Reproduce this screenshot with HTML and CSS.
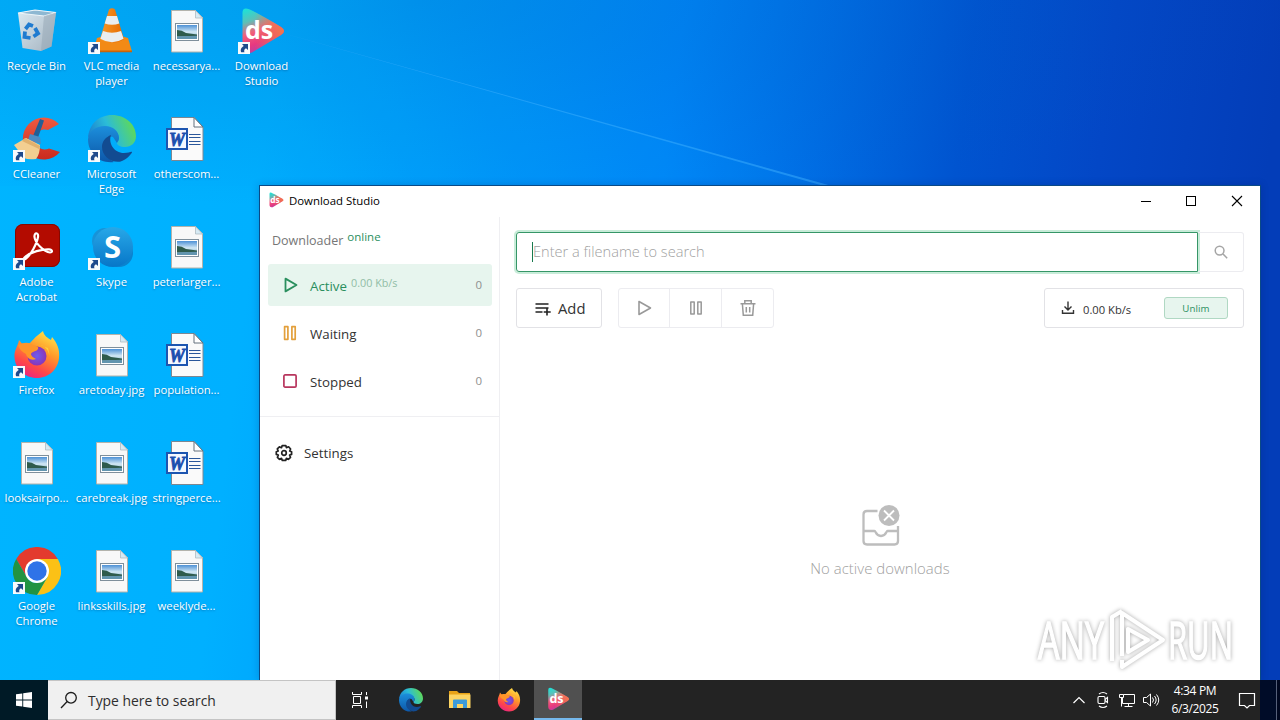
FILE: index.html
```html
<!DOCTYPE html>
<html lang="en">
<head>
<meta charset="utf-8">
<title>Download Studio</title>
<link rel="stylesheet" href="styles.css">
</head>
<body>
<svg class="sprite" width="0" height="0" aria-hidden="true">
  <defs>
    <linearGradient id="g-ds1" x1="0" y1="0" x2="0.35" y2="1"><stop offset="0" stop-color="#14e6dc"/><stop offset=".3" stop-color="#5cc0b8"/><stop offset=".55" stop-color="#f0617a"/><stop offset=".8" stop-color="#e8397f"/><stop offset="1" stop-color="#b43fa8"/></linearGradient>
    <linearGradient id="g-ds2" x1="0" y1="0" x2="1" y2="0"><stop offset=".3" stop-color="#f2774a" stop-opacity="0"/><stop offset="1" stop-color="#f2774a"/></linearGradient>
    <linearGradient id="g-edge1" x1="0" y1=".6" x2="1" y2=".3"><stop offset="0" stop-color="#1b7fd0"/><stop offset=".45" stop-color="#2bbcd8"/><stop offset="1" stop-color="#64dc4c"/></linearGradient>
    <linearGradient id="g-edge2" x1="0" y1="0" x2="0" y2="1"><stop offset="0" stop-color="#1c8fdc"/><stop offset="1" stop-color="#0d57a8"/></linearGradient>
    <linearGradient id="g-bin" x1="0" y1="0" x2="1" y2="1"><stop offset="0" stop-color="#dceaf2"/><stop offset="1" stop-color="#a3b2bf"/></linearGradient>
    <linearGradient id="g-fox" x1=".8" y1="0" x2=".3" y2="1"><stop offset="0" stop-color="#ffe94a"/><stop offset=".4" stop-color="#ff9a2a"/><stop offset=".75" stop-color="#ff4848"/><stop offset="1" stop-color="#ec2482"/></linearGradient>
    <radialGradient id="g-foxb"><stop offset="0" stop-color="#6c5cf0"/><stop offset="1" stop-color="#8a35b8"/></radialGradient>
    <linearGradient id="g-sky" x1="0" y1="0" x2="0" y2="1"><stop offset="0" stop-color="#28a8e8"/><stop offset="1" stop-color="#0776c8"/></linearGradient>
    <linearGradient id="g-photo" x1="0" y1="0" x2="0" y2="1"><stop offset="0" stop-color="#4d91d6"/><stop offset=".5" stop-color="#d3e8f4"/><stop offset="1" stop-color="#6ba2c0"/></linearGradient>
    <linearGradient id="g-cone" x1="0" y1="0" x2="1" y2="0"><stop offset="0" stop-color="#f79a28"/><stop offset="1" stop-color="#e56a00"/></linearGradient>
    <linearGradient id="g-cc" x1="0" y1="0" x2="0" y2="1"><stop offset="0" stop-color="#ef5a40"/><stop offset="1" stop-color="#c92a1e"/></linearGradient>
  </defs>
  <symbol id="shortcut" viewBox="0 0 12 12"><rect width="12" height="12" fill="#f7fafc"/><path d="M4 2h6v6L8 6.200C6.200 7.300 5.800 8.600 6.500 10.300H3.200C2 7.500 3.500 5.300 5.800 4z" fill="#1e4a8c"/></symbol>
  <symbol id="bin" viewBox="0 0 48 48">
    <path d="M5 6l17-3 21 2.500-4.500 34L28 44 9.500 41z" fill="url(#g-bin)"/>
    <path d="M5 6l17-3 21 2.500L31 9z" fill="#8eb8d2" stroke="#edf5f9" stroke-width="1.200"/>
    <path d="M31 9l12-3.500-4.500 34L28 44z" fill="#94a6b3" opacity=".5"/>
    <g fill="none" stroke="#1f7bd0" stroke-width="3.800"><path d="M12.500 22l3.500-4.500 4 1.500"/><path d="M22 21l3 5.500-4.500 3"/><path d="M17.500 31l-6-1 .5-5.500"/></g>
  </symbol>
  <symbol id="vlc" viewBox="0 0 48 48">
    <path d="M9 31l7-2h17l7 2 4 13.500H5z" fill="#f28a16"/><path d="M5 43.500h39v1.800H5z" fill="#c96408"/>
    <path d="M21 2.500q3-2.500 6 0L36 32q-12 8-24 0z" fill="url(#g-cone)"/>
    <path d="M19 9h10l2.300 7.500q-7.200 2.500-14.600 0zM15 24q9 3.500 18 0l2.600 7.700q-11.600 7-23.200 0z" fill="#e9eef0"/>
  </symbol>
  <symbol id="jpg" viewBox="0 0 48 48">
    <path d="M8.500 3.500h24l7 7v34.500h-31z" fill="#f8f8f8" stroke="#b3b3ac"/><path d="M32.500 3.500v7.500h7z" fill="#d6eaf4" stroke="#aebbc2" stroke-width=".8"/>
    <rect x="12.500" y="16.500" width="23" height="17" fill="#fff" stroke="#7f8f9b"/><rect x="14" y="18" width="20" height="14" fill="url(#g-photo)"/>
    <path d="M14 23q5 0 9 3l11 1.500v1.500l-20 .5z" fill="#2f5b4c"/><path d="M14 29.500l20-.8V32H14z" fill="#6295af"/>
  </symbol>
  <symbol id="word" viewBox="0 0 48 48">
    <path d="M8.500 2.500h22.500l9 9.500v33.500H8.500z" fill="#fafafa" stroke="#7c8792"/><path d="M31 2.500V12h9z" fill="#fff" stroke="#65717c"/>
    <path d="M26 19.500h11.500M26 22.500h11.500M26 26.500h11.500M26 29.500h11.500" stroke="#2b579a"/>
    <rect x="4" y="14" width="20" height="20" fill="#f4f8ff" stroke="#1d55b0" stroke-width="2"/>
    <text x="14" y="30.500" text-anchor="middle" class="word-letter">W</text>
  </symbol>
  <symbol id="ds" viewBox="0 0 48 48">
    <path d="M4.500 7Q4 0 10.500 2Q16 4 43 20q6 4 0 8L14 45.500Q5 48 4.500 40z" fill="url(#g-ds1)"/>
    <path d="M4.500 7Q4 0 10.500 2Q16 4 43 20q6 4 0 8L14 45.500Q5 48 4.500 40z" fill="url(#g-ds2)"/>
    <text x="21" y="32" text-anchor="middle" class="ds-letters">ds</text>
  </symbol>
  <symbol id="cc" viewBox="0 0 48 48">
    <path d="M46 9A21 21 0 1 0 47 37L36 33.500A10 10 0 1 1 35 15z" fill="url(#g-cc)"/>
    <path d="M27 4l4 1.500-7 20-5-2z" fill="#215f96"/><path d="M17 19l10 3 1 7-13-4z" fill="#4a8bc2"/>
    <path d="M1 30l12-7 14 7q0 9-4 14-8 1-12-1z" fill="#f3cf91"/><path d="M12 23l15 8-1 3-17-8z" fill="#e1b16d"/>
  </symbol>
  <symbol id="edge" viewBox="0 0 48 48">
    <path d="M0 23C1 9 11 0 24 0s24 9 24 21c0 7-5 11-11 11-5 0-8-2-8-4 0-1 2-2 2-5 0-5-5-9-12-9C9 14 2 18 0 23z" fill="url(#g-edge1)"/>
    <path d="M0 24c1-8 8-13 17-13 8 0 14 5 14 12 0 3-2 4-2 5l-4-6c-4-1-8 2-9 7-1 7 4 15 10 18C11 49 0 38 0 24z" fill="url(#g-edge2)"/>
    <path d="M14 32c0-6 4-10 9-12-3 8 3 18 13 18 5 0 7-2 8-1 1 0-5 8-12 9.700C23 48 14 41 14 32z" fill="#124b91"/>
  </symbol>
  <symbol id="adobe" viewBox="0 0 48 48">
    <rect x="2" y="1" width="45" height="43" rx="8" fill="#b30b00"/><rect x="2.500" y="1.500" width="44" height="42" rx="7.500" fill="none" stroke="#860800"/>
    <path d="M12 34c-2 2-1 3 1 1.500C18 32 24 20 25 14c.8-5-4-5-3.500 0C22 20 31 29 37 29.500c3 0 2.500-3-1-3.200C29 26 18 29 12 34z" fill="none" stroke="#fff" stroke-width="2.200"/>
  </symbol>
  <symbol id="skype" viewBox="0 0 48 48">
    <circle cx="17" cy="18" r="13" fill="#1793d8"/><circle cx="31" cy="30" r="14" fill="#0a83cf"/><circle cx="25" cy="24" r="20" fill="url(#g-sky)"/>
    <text x="24.500" y="35" text-anchor="middle" class="skype-letter">S</text>
  </symbol>
  <symbol id="fox" viewBox="0 0 48 48">
    <path d="M30 0c1 5 5 7 8 9l1-3c5 6 8 12 7 21-1 11-10 20-22 20S2 38 1.500 26C1 19 5 15 6 9l4 5 7-2q6-7 13-12z" fill="url(#g-fox)"/>
    <circle cx="24" cy="25" r="9.500" fill="url(#g-foxb)"/>
    <path d="M5 14c6-3 11-3 15 0 4 1 6 2 5 4-2 3-6 2-7 5 0 2 3 4 5 5-5 2-9-1-10-5-4-2-7-5-8-9z" fill="#ff9528"/>
    <path d="M27 14c6 1 10 7 9 13q1-5-1-10z" fill="#ffcf3a"/>
  </symbol>
  <symbol id="chrome" viewBox="0 0 48 48">
    <path d="M24 48A24 24 0 0 0 44.800 12H24l10.400 18z" fill="#fbc116"/>
    <path d="M3.200 12L13.600 30 24 12h20.800A24 24 0 0 0 3.200 12z" fill="#e33b2e"/>
    <path d="M3.200 12L13.600 30A12 12 0 0 0 24 36L24 48A24 24 0 0 1 3.200 12z" fill="#229342"/>
    <path d="M24 36l10.400-6L24 48z" fill="#229342"/>
    <circle cx="24" cy="24" r="12" fill="#fff"/><circle cx="24" cy="24" r="9.700" fill="#2f73e8"/>
  </symbol>
</svg>

<div class="screen">
  <svg class="beam" width="1280" height="186" viewBox="0 0 1280 186"><path d="M265 28L832 186H0V40z" fill="#00a8ff" opacity=".09"/><path d="M265 28L832 186H824z" fill="#45b4ff" opacity=".45"/></svg>

  <ul class="desktop">
    <li class="item"><svg class="pic"><use href="#bin"/></svg><span class="label">Recycle Bin</span></li>
    <li class="item"><svg class="pic"><use href="#cc"/></svg><svg class="link"><use href="#shortcut"/></svg><span class="label">CCleaner</span></li>
    <li class="item"><svg class="pic"><use href="#adobe"/></svg><svg class="link"><use href="#shortcut"/></svg><span class="label">Adobe<br>Acrobat</span></li>
    <li class="item"><svg class="pic"><use href="#fox"/></svg><svg class="link"><use href="#shortcut"/></svg><span class="label">Firefox</span></li>
    <li class="item"><svg class="pic"><use href="#jpg"/></svg><span class="label">looksairpo...</span></li>
    <li class="item"><svg class="pic"><use href="#chrome"/></svg><svg class="link"><use href="#shortcut"/></svg><span class="label">Google<br>Chrome</span></li>
    <li class="item"><svg class="pic"><use href="#vlc"/></svg><svg class="link"><use href="#shortcut"/></svg><span class="label">VLC media<br>player</span></li>
    <li class="item"><svg class="pic"><use href="#edge"/></svg><svg class="link"><use href="#shortcut"/></svg><span class="label">Microsoft<br>Edge</span></li>
    <li class="item"><svg class="pic"><use href="#skype"/></svg><svg class="link"><use href="#shortcut"/></svg><span class="label">Skype</span></li>
    <li class="item"><svg class="pic"><use href="#jpg"/></svg><span class="label">aretoday.jpg</span></li>
    <li class="item"><svg class="pic"><use href="#jpg"/></svg><span class="label">carebreak.jpg</span></li>
    <li class="item"><svg class="pic"><use href="#jpg"/></svg><span class="label">linksskills.jpg</span></li>
    <li class="item"><svg class="pic"><use href="#jpg"/></svg><span class="label">necessarya...</span></li>
    <li class="item"><svg class="pic"><use href="#word"/></svg><span class="label">otherscom...</span></li>
    <li class="item"><svg class="pic"><use href="#jpg"/></svg><span class="label">peterlarger...</span></li>
    <li class="item"><svg class="pic"><use href="#word"/></svg><span class="label">population...</span></li>
    <li class="item"><svg class="pic"><use href="#word"/></svg><span class="label">stringperce...</span></li>
    <li class="item"><svg class="pic"><use href="#jpg"/></svg><span class="label">weeklyde...</span></li>
    <li class="item"><svg class="pic"><use href="#ds"/></svg><svg class="link"><use href="#shortcut"/></svg><span class="label">Download<br>Studio</span></li>
  </ul>

  <section class="window">
    <header class="titlebar">
      <svg class="title-icon" viewBox="0 0 48 48"><use href="#ds"/></svg>
      <span class="title">Download Studio</span>
      <div class="controls">
        <svg width="46" height="30"><path d="M18 15.500h10" stroke="#000"/></svg>
        <svg width="45" height="30"><rect x="17.500" y="10.500" width="9" height="9" fill="none" stroke="#000"/></svg>
        <svg width="46" height="30"><path d="M18 10l10 10M28 10L18 20" stroke="#000" stroke-width="1.100"/></svg>
      </div>
    </header>
    <div class="body">
      <aside class="sidebar">
        <div class="heading"><span class="name">Downloader</span><span class="online">online</span></div>
        <nav class="nav">
          <div class="nav-item active"><svg class="nav-icon" viewBox="0 0 16 16"><path d="M3.500 1.600v12.800L14.500 8z" fill="none" stroke="#2a8f5e" stroke-width="1.800" stroke-linejoin="round"/></svg><span class="nav-text">Active</span><span class="rate">0.00 Kb/s</span><span class="count">0</span></div>
          <div class="nav-item"><svg class="nav-icon" viewBox="0 0 16 16"><path d="M2.600 1.700h3.300v12.600H2.600zM9.900 1.700h3.300v12.600H9.900z" fill="none" stroke="#e3a03c" stroke-width="1.700" stroke-linejoin="round"/></svg><span class="nav-text">Waiting</span><span class="count">0</span></div>
          <div class="nav-item"><svg class="nav-icon" viewBox="0 0 16 16"><rect x="1.900" y="1.900" width="12.200" height="12.200" rx="1.200" fill="none" stroke="#b8365e" stroke-width="1.700"/></svg><span class="nav-text">Stopped</span><span class="count">0</span></div>
        </nav>
        <div class="settings"><svg width="18" height="18" viewBox="0 0 18 18" fill="none" stroke="#222" stroke-width="1.700" stroke-linejoin="round"><path d="M7.200 1.600h3.600l.6 2 2.200-.8 2 2.200-.9 2 1.900.8v2.600l-2 .7.900 2.200-2.100 2-2-.9-.7 2H7.300l-.8-2-2 .9-2.100-2 .9-2.200-2-.7V7.700l1.900-.7-.9-2.100 2.100-2 2.100.8z"/><circle cx="9" cy="9" r="2.300"/></svg><span>Settings</span></div>
      </aside>
      <main class="main">
        <div class="search">
          <div class="field"><span class="placeholder">Enter a filename to search</span></div>
          <div class="go"><svg width="16" height="16" viewBox="0 0 16 16" fill="none" stroke="#a5a5a5" stroke-width="1.500"><circle cx="6.600" cy="6.600" r="4.400"/><path d="M10 10l4.200 4.200"/></svg></div>
        </div>
        <div class="toolbar">
          <div class="add"><svg width="18" height="18" viewBox="0 0 18 18" stroke="#222" stroke-width="1.600" fill="none"><path d="M1.500 5h13M1.500 9h13M1.500 13h7M13 9.500v7M9.700 13h7"/></svg><span>Add</span></div>
          <div class="group">
            <div class="tool"><svg width="18" height="18" viewBox="0 0 18 18"><path d="M4 2.500v13L15.500 9z" fill="none" stroke="#999" stroke-width="1.600" stroke-linejoin="round"/></svg></div>
            <div class="tool"><svg width="18" height="18" viewBox="0 0 18 18"><path d="M3.800 3h3.400v12H3.800zM10.800 3h3.400v12h-3.400z" fill="none" stroke="#999" stroke-width="1.500" stroke-linejoin="round"/></svg></div>
            <div class="tool"><svg width="18" height="18" viewBox="0 0 18 18" fill="none" stroke="#999" stroke-width="1.500"><path d="M1.500 4.700h15M5.800 4.500V1.700h6.400v2.800M3.400 5l.9 11.300h9.400L14.600 5M7.300 8v5.500M10.700 8v5.500"/></svg></div>
          </div>
          <div class="speed"><svg width="14" height="14" viewBox="0 0 14 14" fill="none" stroke="#333" stroke-width="1.400"><path d="M7 .5v8M3.500 5.500L7 9l3.500-3.500M1.500 9v3.300h11V9"/></svg><span class="speed-text">0.00 Kb/s</span><span class="unlim">Unlim</span></div>
        </div>
        <div class="empty">
          <svg width="42" height="44" viewBox="0 0 42 44" fill="none" stroke="#bdbdbd" stroke-width="2.300"><path d="M18.500 7H8Q4.500 7 4.500 10.500v26.500q0 3.500 3.500 3.500h27.500q3.500 0 3.500-3.500V22M4.500 27h11c1.500 0 1 5 6.500 5s5-5 6.500-5H39"/><circle cx="30" cy="11.500" r="10.500" fill="#bdbdbd" stroke="none"/><path d="M25 6.500l10 10M35 6.500l-10 10" stroke="#fff" stroke-width="1.800"/></svg>
          <span>No active downloads</span>
        </div>
      </main>
    </div>
  </section>

  <svg class="watermark" width="210" height="74" viewBox="0 0 210 74">
    <text x="9" y="55" textLength="66" lengthAdjust="spacingAndGlyphs" class="mark">ANY</text>
    <text x="139" y="55" textLength="65" lengthAdjust="spacingAndGlyphs" class="mark">RUN</text>
    <g fill="none" stroke="#fff" stroke-width="4" stroke-linejoin="round"><path d="M93 52V9l41 27-41 27v-7"/><path d="M99 25v23l20-12zM93 7l-10 6v44"/></g>
  </svg>

  <footer class="taskbar">
    <div class="start"><svg width="16" height="16" viewBox="0 0 16 16" fill="#fff"><path d="M0 2.300L6.300 1.400v6.100H0zM7.200 1.300L16 0v7.500H7.200zM0 8.400h6.300v6.200L0 13.700zM7.200 8.400H16V16l-8.800-1.300z"/></svg></div>
    <div class="task-search"><svg width="18" height="18" viewBox="0 0 18 18" fill="none" stroke="#1c1c1c" stroke-width="1.300"><circle cx="11" cy="6.800" r="5.300"/><path d="M7.200 10.500L1 17"/></svg><span>Type here to search</span></div>
    <div class="apps">
      <div class="app"><svg width="18" height="18" viewBox="0 0 18 18" fill="none" stroke="#fff"><path d="M1.500 1v2.500h9V1M1.500 17v-2.500h9V17M2.500 5.500h7v7h-7zM15.500 1v3M15.500 10.500V17"/><path d="M14 5.500h3v3h-3z" fill="#fff" stroke="none"/></svg></div>
      <div class="app wide"><svg width="24" height="24"><use href="#edge"/></svg></div>
      <div class="app wide"><svg width="22" height="20" viewBox="0 0 22 20"><path d="M0 1h8l2 2h11v4H0z" fill="#e8a317"/><path d="M0 4.500h21.500V18H0z" fill="#fcd462"/><path d="M4 10.500q0-1 1-1h12q1 0 1 1V18h-4v-4H8v4H4z" fill="#3c9bd9"/></svg></div>
      <div class="app wide"><svg width="24" height="24"><use href="#fox"/></svg></div>
      <div class="app open"><svg width="24" height="24"><use href="#ds"/></svg></div>
    </div>
    <div class="tray">
      <svg width="24" height="24" viewBox="0 0 24 24" fill="none" stroke="#fff" stroke-width="1.200"><path d="M6.500 15l5.500-5.500 5.500 5.500"/></svg>
      <svg width="24" height="24" viewBox="0 0 24 24" fill="none" stroke="#fff" stroke-width="1.100"><rect x="7" y="8.500" width="7" height="7" rx="1.200"/><path d="M14 11.500l2.500-2v5l-2.500-2M8 6q4-3 8 0M8 18q4 3 8 0"/></svg>
      <svg width="24" height="24" viewBox="0 0 24 24" fill="none" stroke="#fff"><path d="M8.500 6.500h11v9H7.500V10M13.500 15.500v3M9.500 18.500h8M4.500 6.500h4v3h-4zM6.500 9.500v9"/></svg>
      <svg width="24" height="24" viewBox="0 0 24 24" fill="none" stroke="#fff"><path d="M4.500 9.500h3l4-3.500v12l-4-3.500h-3zM13.500 9.500q2 2.500 0 5M15.500 8q3.300 4 0 8M17.500 6.500q4.500 5.500 0 11"/></svg>
      <div class="clock"><span>4:34 PM</span><span>6/3/2025</span></div>
      <svg class="note" width="26" height="24" viewBox="0 0 26 24" fill="none" stroke="#fff" stroke-width="1.200"><path d="M5.500 5.500h15v12h-5L13 20l-2.500-2.500h-5z"/></svg>
      <div class="peek"></div>
    </div>
  </footer>
</div>
</body>
</html>
```
FILE: styles.css
```css
* { box-sizing: border-box; }
body { margin: 0; overflow: hidden; font-family: "Open Sans", "Noto Sans", sans-serif; }
svg { display: block; flex: none; }
.sprite { position: absolute; }
.screen {
  position: relative; width: 1280px; height: 720px; overflow: hidden;
  display: flex; flex-direction: column; justify-content: flex-end;
  background:
    radial-gradient(ellipse 900px 210px at 420px 0, rgba(0,90,180,.24), rgba(0,90,180,.12) 50%, transparent),
    linear-gradient(97deg, #00b5ff 0, #00b0ff 280px, #0098fa 500px, #0086f8 680px, #006de4 830px, #0054d0 970px, #0347c6 1110px, #033db8 1280px);
}
.beam { position: absolute; left: 0; top: 0; }
.desktop {
  position: absolute; left: -1px; top: 0; margin: 0; padding: 0; list-style: none;
  display: grid; grid-template-rows: repeat(6, 108px); grid-auto-flow: column; grid-auto-columns: 75px;
}
.item { position: relative; display: flex; flex-direction: column; align-items: center; padding-top: 7px; }
.pic { width: 48px; height: 48px; }
.link { position: absolute; left: 14px; top: 42px; width: 12px; height: 12px; }
.label {
  margin-top: 3px; font-size: 11.300px; line-height: 15px; letter-spacing: -.02px; color: #fff;
  text-align: center; white-space: nowrap; text-shadow: 0 1px 2px rgba(0,40,90,.4);
}
.word-letter { font: italic bold 18px "Liberation Serif", serif; fill: #1d4fae; stroke: #1d4fae; stroke-width: .8px; }
.ds-letters { font: bold 25px "Open Sans", sans-serif; fill: #fff; }
.skype-letter { font: bold 31px "Open Sans", sans-serif; fill: #fff; }

.window {
  position: relative; width: 1002px; height: 495px; margin-left: 259px; background: #fff;
  border: 1px solid #0a4a86; border-bottom: 0; box-shadow: 0 0 8px rgba(0,20,80,.2);
  display: flex; flex-direction: column;
}
.titlebar { height: 31px; display: flex; align-items: center; padding-left: 8px; }
.title-icon { width: 16px; height: 16px; margin-bottom: 3px; }
.title { margin: 0 0 2px 5px; font-size: 11.400px; line-height: 16px; color: #000; }
.controls { display: flex; margin: 0 0 2px auto; }
.body { flex: 1; display: flex; }
.sidebar { width: 240px; border-right: 1px solid #efeff2; }
.heading { display: flex; height: 47px; padding: 14px 0 0 12px; gap: 4px; line-height: 20px; font-size: 12.500px; color: #767676; }
.online { font-size: 11.500px; line-height: 12px; color: #2a8f5e; }
.nav { display: flex; flex-direction: column; gap: 6px; padding: 0 7px 14px 8px; border-bottom: 1px solid #efeff2; }
.nav-item { height: 42px; display: flex; align-items: center; padding: 0 10px 0 14px; border-radius: 3px; font-size: 13.300px; color: #333; }
.nav-icon { width: 16px; height: 16px; }
.nav-text { margin: 2px 0 0 12px; }
.nav-item.active { background: #e7f5ee; color: #2a8f5e; }
.rate { margin: -5px 0 0 4px; font-size: 10.800px; color: #91bda6; }
.count { margin-left: auto; font-size: 11.500px; color: #8f8f8f; margin-top: -2px; }
.settings { display: flex; align-items: center; gap: 11px; padding: 25px 0 0 15px; font-size: 13.300px; line-height: 22px; color: #333; }
.main { flex: 1; display: flex; flex-direction: column; gap: 16px; padding: 15px 16px 0; }
.search { display: flex; height: 40px; }
.field { width: 682px; border: 1px solid #369667; border-radius: 3px 0 0 3px; box-shadow: 0 0 0 2px #c8ecd9; padding: 9px 0 0 15px; }
.placeholder { display: block; height: 20px; border-left: 1px solid #18794e; font-size: 14.600px; font-weight: 300; line-height: 19px; color: #9f9f9f; }
.go { flex: 1; display: flex; align-items: center; justify-content: center; border: 1px solid #ececf0; border-left: 0; border-radius: 0 3px 3px 0; }
.toolbar { display: flex; height: 40px; }
.add { width: 86px; display: flex; align-items: center; padding-left: 17px; gap: 6px; border: 1px solid #e2e2e6; border-radius: 3px; font-size: 14.800px; color: #333; }
.group { display: flex; margin-left: 16px; border: 1px solid #ececf0; border-radius: 3px; }
.tool { width: 52px; display: flex; align-items: center; justify-content: center; border-right: 1px solid #ececf0; }
.tool:first-child { width: 51px; }
.tool:last-child { width: 51px; border-right: 0; }
.speed { width: 200px; margin-left: auto; display: flex; align-items: center; padding: 0 15px 0 16px; border: 1px solid #e2e2e6; border-radius: 3px; }
.speed-text { margin: 3px 0 0 8px; font-size: 11.200px; color: #333; }
.unlim { width: 64px; height: 22px; margin-left: auto; text-align: center; line-height: 21px; font-size: 9.700px; letter-spacing: .1px; color: #2a8f5e; background: #e7f5ee; border: 1px solid #b0d8c3; border-radius: 3px; }
.empty { display: flex; flex-direction: column; align-items: center; margin-top: 160px; font-size: 14.900px; font-weight: 300; line-height: 20px; color: #a0a0a0; gap: 10px; letter-spacing: .05px; }

.watermark { position: absolute; left: 1029px; top: 604px; filter: drop-shadow(0 0 2px rgba(0,0,0,.35)); }
.mark { font: 51px "Open Sans", sans-serif; fill: #fff; stroke: #fff; stroke-width: 1.500px; }

.taskbar { position: relative; height: 40px; background: #232323; display: flex; }
.start { width: 48px; background: #001a26; display: flex; align-items: center; justify-content: center; }
.task-search { width: 288px; display: flex; align-items: center; gap: 10px; padding-left: 12px; background: #f0f0f0; border: 1px solid #c4c4c4; border-left: 0; font-size: 13.900px; color: #2d2d2d; }
.apps { display: flex; }
.app { width: 48px; display: flex; align-items: center; justify-content: center; }
.wide { width: 49px; padding-left: 5px; }
.open { margin-left: 3px; background: #505050; border-bottom: 2px solid #76b9ed; }
.tray { margin-left: auto; display: flex; align-items: center; }
.clock { width: 64px; display: flex; flex-direction: column; align-items: center; font-size: 12px; line-height: 18px; color: #fff; letter-spacing: -.35px; }
.note { margin: 0 0 0 7px; }
.peek { width: 20px; height: 40px; background: linear-gradient(90deg, #000c28 16px, #56617a 16px, #56617a 17px, #000820 17px); }
```
